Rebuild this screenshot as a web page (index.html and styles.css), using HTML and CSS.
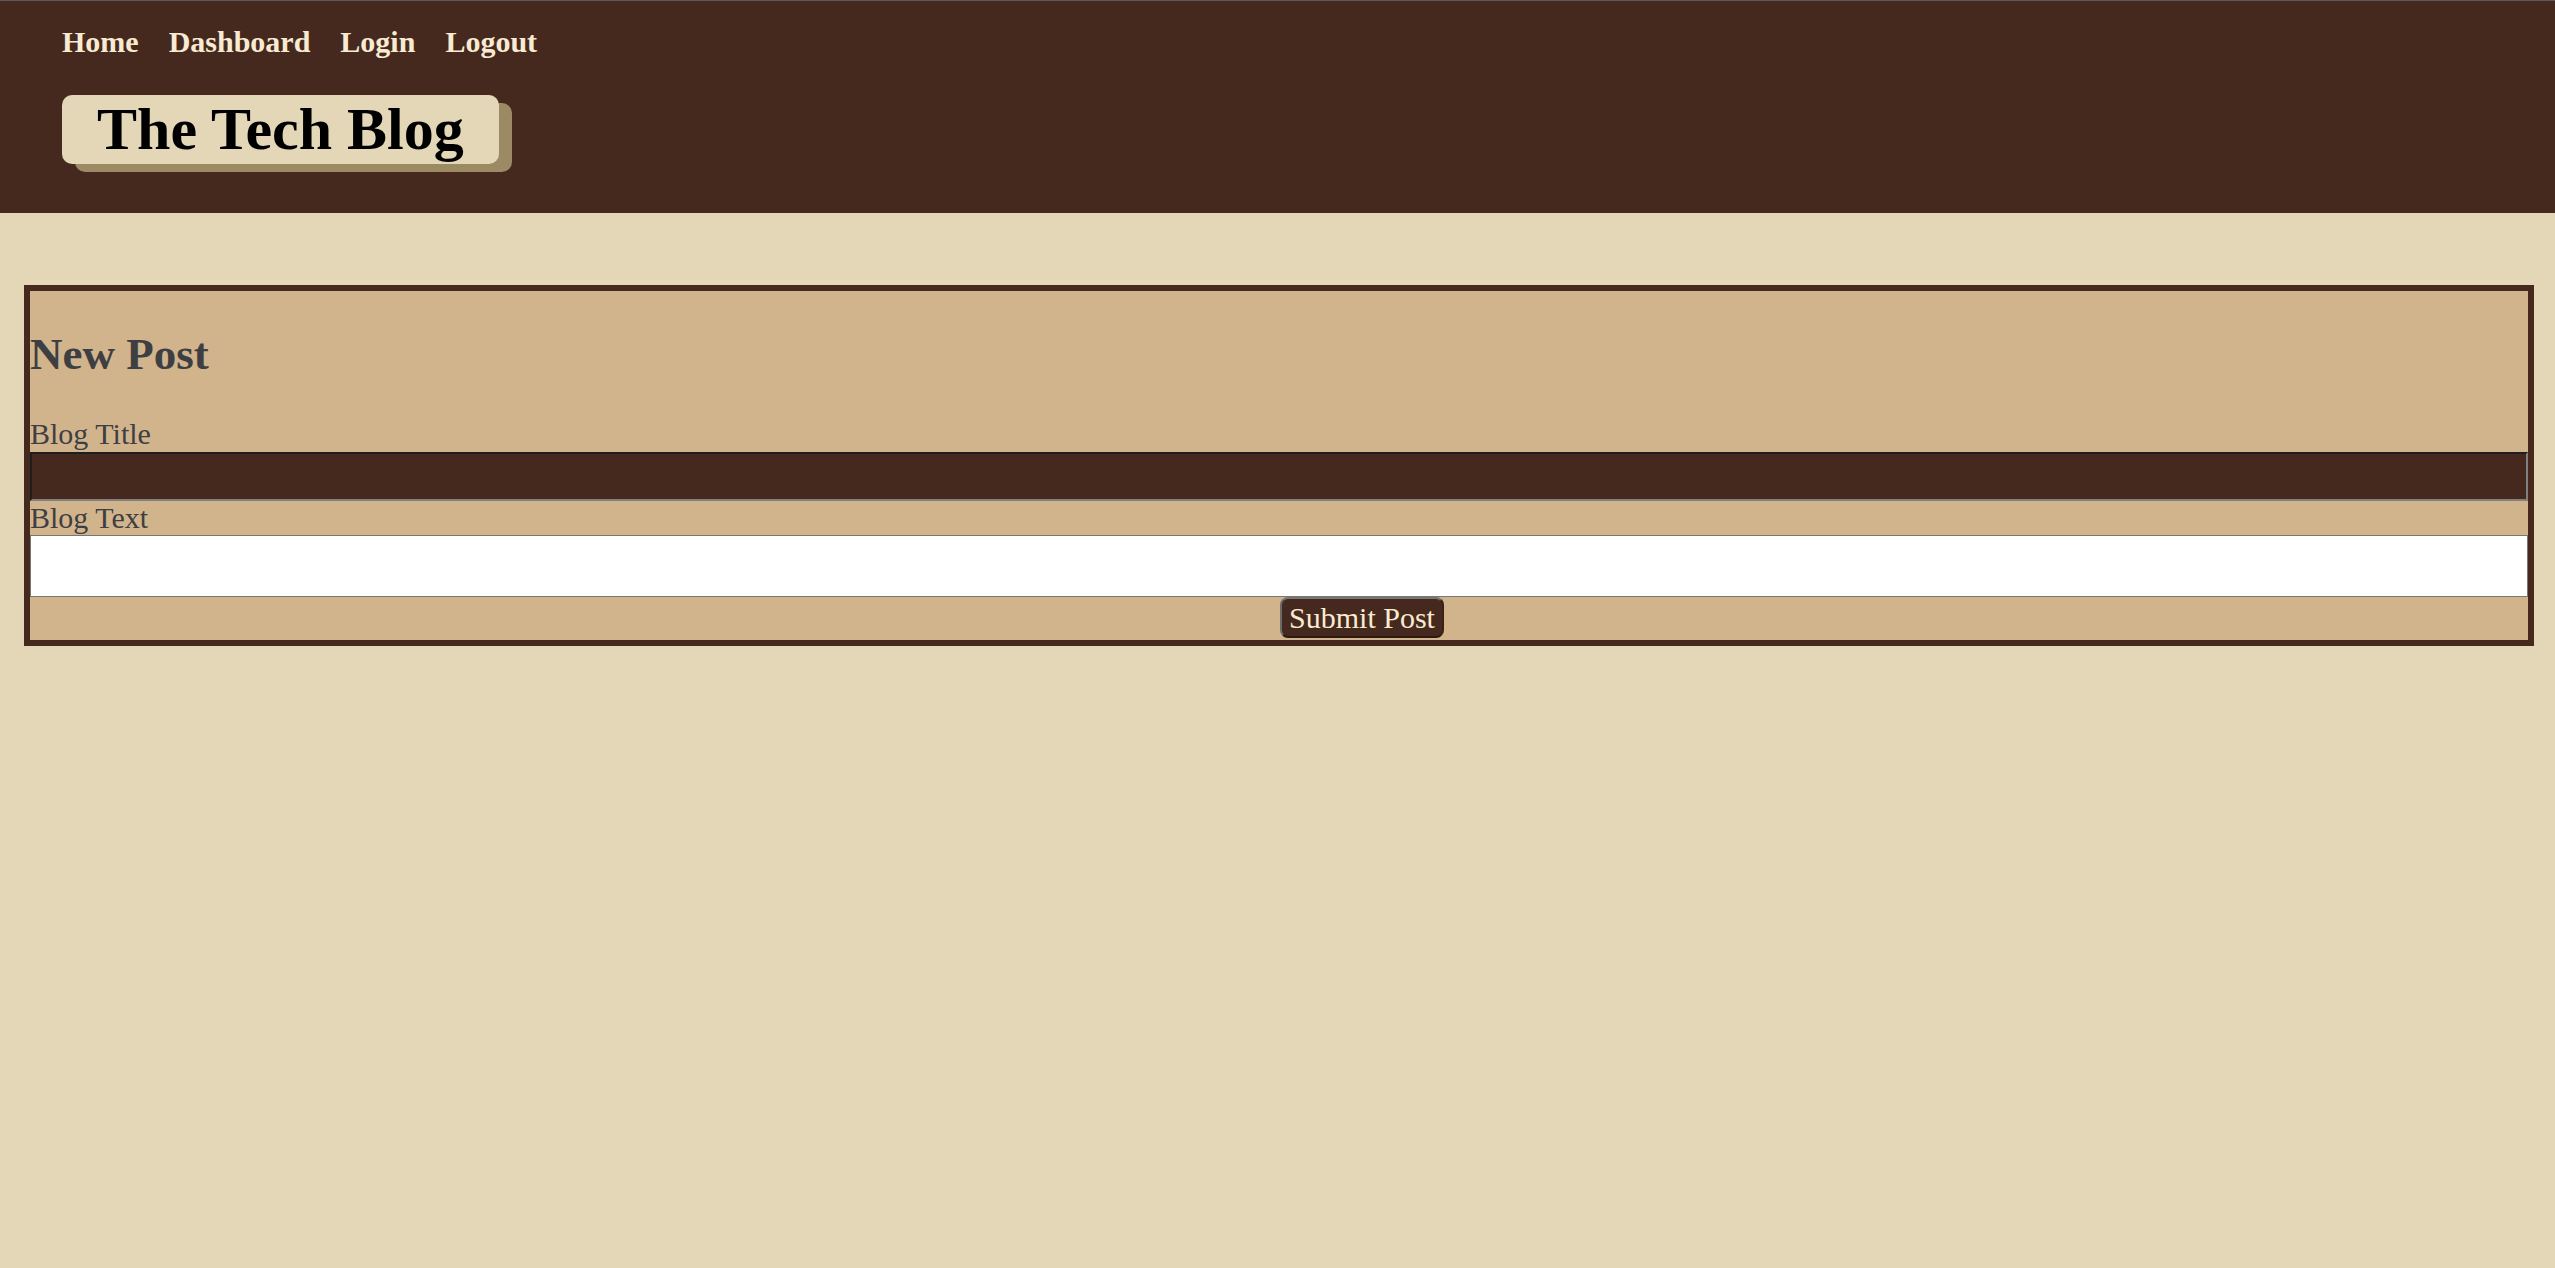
FILE: index.html
```html
<!DOCTYPE html>
<html lang="en">
<head>
<meta charset="utf-8">
<title>The Tech Blog</title>
<link rel="stylesheet" href="styles.css">
</head>
<body>
<header class="site-header">
  <nav class="nav">
    <a class="nav-link" href="#">Home</a>
    <a class="nav-link" href="#">Dashboard</a>
    <a class="nav-link" href="#">Login</a>
    <a class="nav-link" href="#">Logout</a>
  </nav>
  <h1 class="brand">The Tech Blog</h1>
</header>
<main class="main">
  <form class="post-card">
    <h2 class="post-heading">New Post</h2>
    <label class="field-label" for="title">Blog Title</label>
    <input class="title-input" id="title" type="text">
    <label class="field-label" for="body">Blog Text</label>
    <textarea class="text-input" id="body"></textarea>
    <button class="submit-btn" type="button">Submit Post</button>
  </form>
</main>
</body>
</html>
```

FILE: styles.css
```css
html, body {
  margin: 0;
  padding: 0;
}

body {
  background: #e3d7b8;
  font-family: "Liberation Serif", "Times New Roman", serif;
  min-height: 1268px;
}

.site-header {
  background: #45291e;
  border-top: 1px solid #5a5a5a;
  padding: 24px 0 49px 62px;
}

.nav {
  display: flex;
  gap: 30px;
}

.nav-link {
  color: #f9ebd2;
  font-weight: bold;
  font-size: 30px;
  line-height: 34.5px;
  text-decoration: none;
}

.brand {
  display: inline-block;
  margin: 35.5px 0 0 0;
  padding: 0 35px;
  background: #e3d7b8;
  color: #000;
  font-size: 60px;
  font-weight: bold;
  line-height: 69px;
  border-radius: 10px;
  box-shadow: 13px 8px 0 #9c8a65;
}

.main {
  padding-top: 72px;
}

.post-card {
  margin: 0 21px 0 24px;
  border: 6px solid #45291e;
  background: #d2b48c;
  color: #3e3f43;
}

.post-heading {
  margin: 37px 0;
  font-size: 45px;
  line-height: 52px;
  font-weight: bold;
}

.field-label {
  display: block;
  font-size: 30px;
  line-height: 34.5px;
}

.title-input {
  display: block;
  box-sizing: border-box;
  width: 100%;
  height: 49px;
  margin: 0;
  background: #45291e;
  border: 2px solid;
  border-color: #1e1e1e #808080 #808080 #1e1e1e;
  color: #f9ebd2;
  font-family: inherit;
  font-size: 30px;
}

.text-input {
  display: block;
  box-sizing: border-box;
  width: 100%;
  height: 62px;
  margin: 0;
  background: #fff;
  border: 1px solid #767676;
  font-family: inherit;
  font-size: 30px;
  resize: none;
}

.submit-btn {
  display: block;
  box-sizing: border-box;
  margin: 0 0 2px calc(50% + 1px);
  width: 164px;
  height: 41px;
  padding: 0;
  background: #45291e;
  color: #f9ebd2;
  border: 2px solid;
  border-color: #767676 #3a2219 #2c1a12 #6a6a6a;
  border-radius: 8px;
  font-family: "Liberation Serif", "Times New Roman", serif;
  font-size: 30px;
  line-height: 35px;
}
```
